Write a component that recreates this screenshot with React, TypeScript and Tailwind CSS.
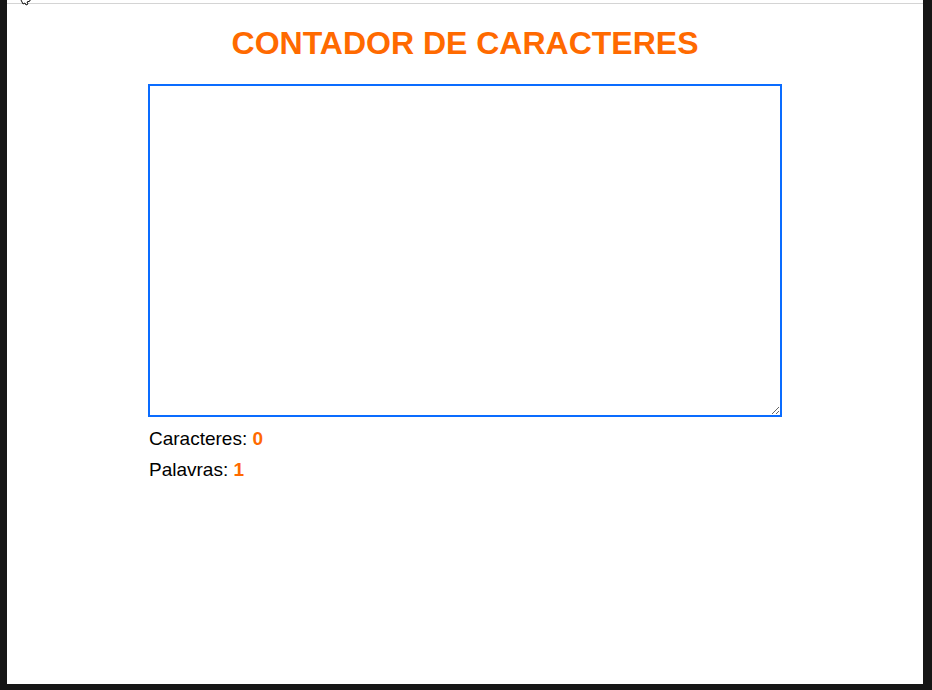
import { useState } from "react";

export default function App() {
  const [text, setText] = useState("");
  const chars = text.length;
  const words = text.split(" ").length;

  return (
    <div className="w-[932px] h-[690px] flex bg-[#161616] pl-[7px] pr-[9px] pb-[6px] font-['Liberation_Sans',Arial,sans-serif]">
      <main className="relative flex-1 flex flex-col bg-white pt-[3px]">
        <div className="h-px bg-[#d4d4d4]" />
        <svg
          className="absolute left-[13px] top-0"
          width="12"
          height="6"
          viewBox="0 0 12 6"
        >
          <path d="M1 0 L3 4 L5 3 L6 5 L8 4 L7 2 L10 1 L10 0" fill="white" stroke="#111" strokeWidth="1" />
        </svg>
        <h1 className="mt-[21px] text-center text-[32px] leading-[37px] font-bold text-[#ff6a00]">
          CONTADOR DE CARACTERES
        </h1>
        <section className="mt-[22px] mx-auto w-[634px] flex flex-col">
          <textarea
            value={text}
            onChange={(e) => setText(e.target.value)}
            className="h-[333px] w-full border-2 border-[#0a6cff] outline-none bg-white"
          />
          <div className="mt-[11px] pl-[1px] flex flex-col gap-[9px] text-[19px] leading-[22px] text-black">
            <p>
              Caracteres: <span className="font-bold text-[#ff6a00]">{chars}</span>
            </p>
            <p>
              Palavras: <span className="font-bold text-[#ff6a00]">{words}</span>
            </p>
          </div>
        </section>
      </main>
    </div>
  );
}
